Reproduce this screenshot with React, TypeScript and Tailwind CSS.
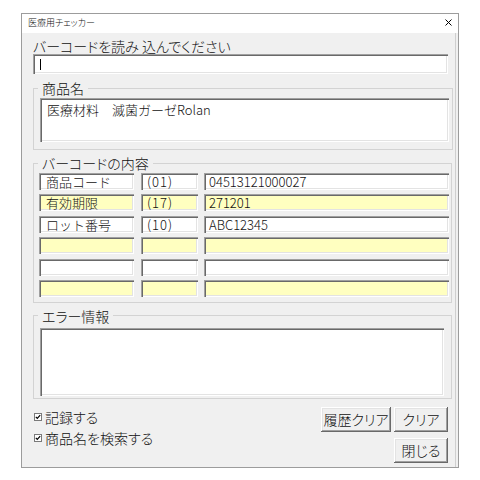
const sunken =
  "shadow-[inset_1px_1px_0_#a0a0a0,inset_2px_2px_0_#696969,inset_-1px_-1px_0_#ffffff,inset_-2px_-2px_0_#e3e3e3]";
const raised =
  "shadow-[inset_-1px_-1px_0_#696969,inset_1px_1px_0_#ffffff,inset_-2px_-2px_0_#a0a0a0,inset_2px_2px_0_#e3e3e3]";

const rows = [
  { name: "商品コード", ai: "(01)", value: "04513121000027", yellow: false },
  { name: "有効期限", ai: "(17)", value: "271201", yellow: true },
  { name: "ロット番号", ai: "(10)", value: "ABC12345", yellow: false },
  { name: "", ai: "", value: "", yellow: true },
  { name: "", ai: "", value: "", yellow: false },
  { name: "", ai: "", value: "", yellow: true },
];

function Cell({ text, yellow, className }: { text: string; yellow: boolean; className: string }) {
  return (
    <div
      className={`${sunken} ${yellow ? "bg-[#ffffc0]" : "bg-white"} h-[17px] text-[13px] leading-[17px] whitespace-nowrap overflow-hidden [font-feature-settings:normal] ${className}`}
    >
      {text}
    </div>
  );
}

function Check({ label }: { label: string }) {
  return (
    <div className="flex items-center h-[18px] gap-[3px]">
      <svg width="8" height="8" viewBox="0 0 8 8" className="ml-[1px]">
        <rect x="0.5" y="0.5" width="7" height="7" fill="#fff" stroke="#7a7a7a" />
        <path d="M1.8 3.8 L3.3 5.4 L6.2 2.2" fill="none" stroke="#000" strokeWidth="1.2" />
      </svg>
      <span className="text-[14px] leading-[18px]">{label}</span>
    </div>
  );
}

export default function App() {
  return (
    <div className="w-[480px] h-[480px] bg-white pt-[13px] pl-[21px] font-['Noto_Sans_CJK_JP',sans-serif] font-light [font-feature-settings:'palt'] text-[#111]">
      <div className="w-[438px] h-[455px] border border-[#9c9c9c] bg-[#f0f0f0] flex flex-col">
        {/* title bar */}
        <div className="h-[19px] shrink-0 bg-white flex items-center justify-between pl-[6px] pr-[6px] pb-[3px]">
          <span className="text-[9px] leading-none">医療用チェッカー</span>
          <svg width="7" height="7" viewBox="0 0 7 7">
            <path d="M0.5 0.5 L6.5 6.5 M6.5 0.5 L0.5 6.5" stroke="#000" strokeWidth="1" />
          </svg>
        </div>

        <div className="flex-1 mr-[2px] border-r border-[#cfcfcf] pl-[11px] flex flex-col">
          <div className="mt-[5px] h-[16px] text-[14px] leading-[16px]">バーコードを読み 込んでください</div>
          <div className={`${sunken} bg-white w-[415px] h-[20px] flex items-center`}>
            <div className="ml-[7px] w-[1px] h-[11px] bg-black" />
          </div>

          {/* 商品名 */}
          <fieldset className="mt-[6px] w-[420px] border border-[#d3d3d3]">
            <legend className="ml-[4px] px-[4px] text-[14px] leading-[16px]">商品名</legend>
            <div className="mt-[2px] pl-[6px] pb-[7px]">
              <div
                className={`${sunken} bg-white w-[409px] h-[44px] pl-[7px] pt-[4px] text-[13px] leading-[16px] [font-feature-settings:normal]`}
              >
                医療材料　滅菌ガーゼRolan
              </div>
            </div>
          </fieldset>

          {/* バーコードの内容 */}
          <fieldset className="mt-[5px] w-[419px] border border-[#d3d3d3]">
            <legend className="ml-[4px] px-[4px] text-[14px] leading-[16px]">バーコードの内容</legend>
            <div className="mt-[2px] pl-[5px] pb-[5px] flex flex-col gap-[4.4px]">
              {rows.map((r, i) => (
                <div key={i} className="flex">
                  <Cell text={r.name} yellow={r.yellow} className="w-[95px] pl-[7px]" />
                  <Cell text={r.ai} yellow={r.yellow} className="w-[57px] ml-[7px] pl-[6px] tracking-[1px]" />
                  <Cell text={r.value} yellow={r.yellow} className="w-[245px] ml-[6px] pl-[5px]" />
                </div>
              ))}
            </div>
          </fieldset>

          {/* エラー情報 */}
          <fieldset className="mt-[5px] w-[419px] border border-[#d3d3d3]">
            <legend className="ml-[4px] px-[4px] text-[14px] leading-[16px]">エラー情報</legend>
            <div className="mt-[4px] pl-[6px] pb-[2px]">
              <div className={`${sunken} bg-white w-[404px] h-[68px]`} />
            </div>
          </fieldset>

          {/* bottom */}
          <div className="w-[415px] flex justify-between">
            <div className="pt-[9px] flex flex-col gap-[3px]">
              <Check label="記録する" />
              <Check label="商品名を検索する" />
            </div>
            <div className="pt-[8px] flex flex-col items-end gap-[6px]">
              <div className="flex gap-[3px]">
                <button className={`${raised} bg-[#f0f0f0] w-[70px] h-[25px] text-[14px] leading-[25px]`}>履歴クリア</button>
                <button className={`${raised} bg-[#f0f0f0] w-[54px] h-[25px] text-[14px] leading-[25px]`}>クリア</button>
              </div>
              <button className={`${raised} bg-[#f0f0f0] w-[54px] h-[25px] text-[14px] leading-[25px]`}>閉じる</button>
            </div>
          </div>
        </div>
      </div>
    </div>
  );
}
